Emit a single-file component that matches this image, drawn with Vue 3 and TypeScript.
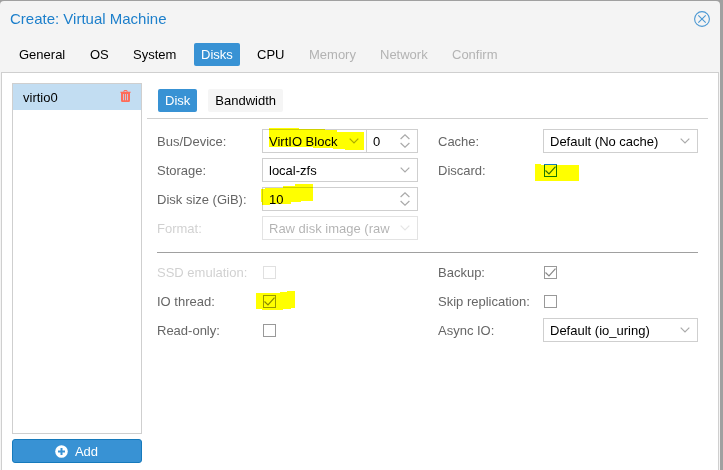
<script setup lang="ts">
interface Tab { label: string; state?: 'active' | 'disabled' }

const tabs: Tab[] = [
  { label: 'General' },
  { label: 'OS' },
  { label: 'System' },
  { label: 'Disks', state: 'active' },
  { label: 'CPU' },
  { label: 'Memory', state: 'disabled' },
  { label: 'Network', state: 'disabled' },
  { label: 'Confirm', state: 'disabled' },
]

interface Field {
  label: string
  kind: 'bus' | 'combo' | 'spin' | 'check'
  value?: string
  checked?: boolean
  focused?: boolean
  disabled?: boolean
  mark?: { name: string; box: string; points: string }
}

const topLeft: Field[] = [
  { label: 'Bus/Device:', kind: 'bus', value: 'VirtIO Block', mark: { name: 'm-bus', box: '0 0 95 22', points: '0,0 30,0 30,1 56,1 56,2 68,2 68,4 95,4 95,22 76,22 76,21 64,21 64,20 44,20 44,19 0,19' } },
  { label: 'Storage:', kind: 'combo', value: 'local-zfs' },
  { label: 'Disk size (GiB):', kind: 'spin', value: '10', mark: { name: 'm-size', box: '0 0 52 21', points: '0,5 4,5 4,4 22,4 22,2 34,2 34,0 52,0 52,17 40,17 40,18 30,18 30,20 9,20 9,21 1,21 1,18 0,18' } },
  { label: 'Format:', kind: 'combo', value: 'Raw disk image (raw', disabled: true },
]
const topRight: Field[] = [
  { label: 'Cache:', kind: 'combo', value: 'Default (No cache)' },
  { label: 'Discard:', kind: 'check', checked: true, focused: true, mark: { name: 'm-discard', box: '0 0 44 17', points: '0,0 6,0 6,1 44,1 44,17 0,17' } },
]
const bottomLeft: Field[] = [
  { label: 'SSD emulation:', kind: 'check', disabled: true },
  { label: 'IO thread:', kind: 'check', checked: true, mark: { name: 'm-io', box: '0 0 39 19', points: '0,2 24,2 24,1 31,1 31,0 39,0 39,17 35,17 35,18 27,18 27,19 6,19 6,18 0,18' } },
  { label: 'Read-only:', kind: 'check' },
]
const bottomRight: Field[] = [
  { label: 'Backup:', kind: 'check', checked: true },
  { label: 'Skip replication:', kind: 'check' },
  { label: 'Async IO:', kind: 'combo', value: 'Default (io_uring)' },
]
const sections = [[topLeft, topRight], [bottomLeft, bottomRight]]
</script>

<template>
  <div class="backdrop">
    <div class="window">
      <header class="title-bar">
        <h1>Create: Virtual Machine</h1>
        <svg class="close" viewBox="0 0 16 16">
          <circle cx="8" cy="8" r="7.4" />
          <path d="M4.3 4.3 11.7 11.7M11.7 4.3 4.3 11.7" />
        </svg>
      </header>
      <nav class="tabs">
        <span v-for="t in tabs" :key="t.label" class="tab" :class="t.state">{{ t.label }}</span>
      </nav>
      <main class="body">
        <aside class="side">
          <div class="list">
            <div class="item">
              <span>virtio0</span>
              <svg class="trash" viewBox="0 0 11 12">
                <path fill-rule="evenodd" d="M3.3 1.7 3.8.5Q4 0 4.5 0H6.5Q7 0 7.2.5L7.7 1.7H10.5Q11 1.7 11 2.2V2.6H10V10.5Q10 12 8.7 12H2.3Q1 12 1 10.5V2.6H0V2.2Q0 1.7.5 1.7ZM4.3 1.7H6.7L6.4.9H4.6ZM3 4V10.2H3.8V4ZM5.1 4V10.2H5.9V4ZM7.2 4V10.2H8V4Z" />
              </svg>
            </div>
          </div>
          <button class="add">
            <svg viewBox="0 0 13 13"><circle cx="6.5" cy="6.5" r="6.3" fill="#fff" /><path d="M6.5 3V10M3 6.5H10" stroke="#3892d4" stroke-width="2" /></svg>
            <span>Add</span>
          </button>
        </aside>
        <section class="content">
          <div class="subtabs">
            <span class="subtab active">Disk</span>
            <span class="subtab">Bandwidth</span>
          </div>
          <div class="form">
            <div v-for="(columns, s) in sections" :key="s" class="section">
              <div v-for="(fields, c) in columns" :key="c" class="column">
                <div v-for="f in fields" :key="f.label" class="field" :class="{ disabled: f.disabled }">
                  <label>{{ f.label }}</label>
                  <div class="control">
                    <div v-if="f.kind !== 'check'" class="input" :class="f.kind">
                      <span>{{ f.value }}</span>
                      <svg v-if="f.kind === 'spin'" class="spinner" viewBox="0 0 10 14"><path d="M.6 5 5 .8 9.4 5M.6 9 5 13.2 9.4 9" /></svg>
                      <svg v-else class="arrow" viewBox="0 0 10 6"><path d="M.7.7 5 5 9.3.7" /></svg>
                    </div>
                    <div v-if="f.kind === 'bus'" class="input device">
                      <span>0</span>
                      <svg class="spinner" viewBox="0 0 10 14"><path d="M.6 5 5 .8 9.4 5M.6 9 5 13.2 9.4 9" /></svg>
                    </div>
                    <div v-if="f.kind === 'check'" class="check" :class="{ focused: f.focused }">
                      <svg v-if="f.checked" viewBox="0 0 11 11"><path d="M.5 5.5 4 9 10.5 1.7" /></svg>
                    </div>
                    <svg v-if="f.mark" class="mark" :class="f.mark.name" :viewBox="f.mark.box"><polygon :points="f.mark.points" /></svg>
                  </div>
                </div>
              </div>
            </div>
          </div>
        </section>
      </main>
    </div>
  </div>
</template>

<style>
body { margin: 0; overflow: hidden; }
</style>

<style scoped>
* { box-sizing: border-box; }
.backdrop {
  width: 723px;
  height: 470px;
  padding: 1px 3px 0 0;
  background: #a0a0a0;
  font: 13px/17px "Liberation Sans", Arial, sans-serif;
  color: #000;
}
.window {
  display: flex;
  flex-direction: column;
  height: 469px;
  padding: 0 1px;
  background: #f4f4f4;
  border-radius: 4px 4px 0 0;
}
.title-bar {
  display: flex;
  justify-content: space-between;
  height: 42px;
  padding: 9px 9px 0 9px;
}
h1 {
  margin: 0;
  font-size: 15px;
  font-weight: 400;
  line-height: 18px;
  color: #1c7fcb;
  white-space: nowrap;
}
.close { width: 16px; height: 16px; margin-top: 1px; fill: none; stroke: #4b98d3; stroke-width: 1.1; }
.tabs {
  display: grid;
  grid-template-columns: 71px 43px 68px 56px 52px 71px 72px 70px;
  justify-items: start;
  height: 29px;
  padding-left: 11px;
}
.tab, .subtab {
  height: 23px;
  padding: 0 7px;
  line-height: 23px;
  border-radius: 2px;
}
.tab.active, .subtab.active { color: #fff; background: #3892d4; }
.tab.disabled { color: #b3b3b3; }
.body {
  display: flex;
  flex: 1;
  gap: 5px;
  padding: 10px 9px 0 10px;
  background: #fff;
  border: 1px solid #cfcfcf;
  border-bottom: 0;
}
.side { width: 130px; }
.list { height: 351px; border: 1px solid #cfcfcf; }
.item {
  display: flex;
  justify-content: space-between;
  height: 26px;
  padding: 6px 10px 0;
  background: #c2ddf2;
}
.item span { line-height: 15px; }
.trash { width: 11px; height: 12px; fill: #ff6c59; }
.add {
  display: flex;
  align-items: center;
  justify-content: center;
  gap: 7px;
  width: 130px;
  height: 24px;
  margin-top: 5px;
  padding: 0 1px 0 0;
  font: inherit;
  color: #fff;
  background: #3892d4;
  border: 1px solid #167abc;
  border-radius: 3px;
}
.add svg { width: 13px; height: 13px; }
.content { width: 561px; }
.subtabs {
  display: flex;
  gap: 11px;
  height: 36px;
  padding: 6px 0 0 11px;
  border-bottom: 1px solid #cfcfcf;
}
.subtab { background: #f5f5f5; }
.form { padding: 10px 10px 0; }
.section { display: flex; gap: 20px; }
.section + .section {
  margin-top: 7px;
  padding-top: 7px;
  border-top: 1px solid #a0a0a0;
}
.section:first-child { height: 116px; }
.column { display: flex; flex-direction: column; gap: 5px; width: 261px; }
.column + .column { width: 260px; }
.field { display: flex; height: 24px; }
.field label { width: 105px; line-height: 25px; color: #666; white-space: nowrap; }
.field.disabled { opacity: .3; }
.control { position: relative; display: flex; flex: 1; }
.input {
  display: flex;
  align-items: center;
  justify-content: space-between;
  flex: 1;
  padding: 0 7px 0 6px;
  white-space: nowrap;
  border: 1px solid #cfcfcf;
}
.input span { height: 22px; line-height: 24px; }
.field.disabled .input { border-color: #a5a5a5; }
.input.bus { flex: 0 0 104px; border-right: 0; }
.input svg, .check svg { fill: none; stroke: #aaa; stroke-width: 1.2; }
.arrow { width: 10px; height: 6px; }
.input .arrow { margin-top: -1px; }
.spinner { width: 10px; height: 14px; }
.check { width: 13px; height: 13px; margin: 6px 0 0 1px; border: 1px solid #999; }
.check svg { display: block; width: 11px; height: 11px; stroke: #888; }
.check.focused { border-color: #167abc; }
.check.focused svg { stroke: #37739b; }
.mark { position: absolute; fill: #ff0; mix-blend-mode: multiply; }
.m-bus { left: 7px; top: -1px; width: 95px; height: 22px; }
.m-size { left: -1px; top: -3px; width: 52px; height: 21px; }
.m-discard { left: -8px; top: 6px; width: 44px; height: 17px; }
.m-io { left: -6px; top: 2px; width: 39px; height: 19px; }
</style>
